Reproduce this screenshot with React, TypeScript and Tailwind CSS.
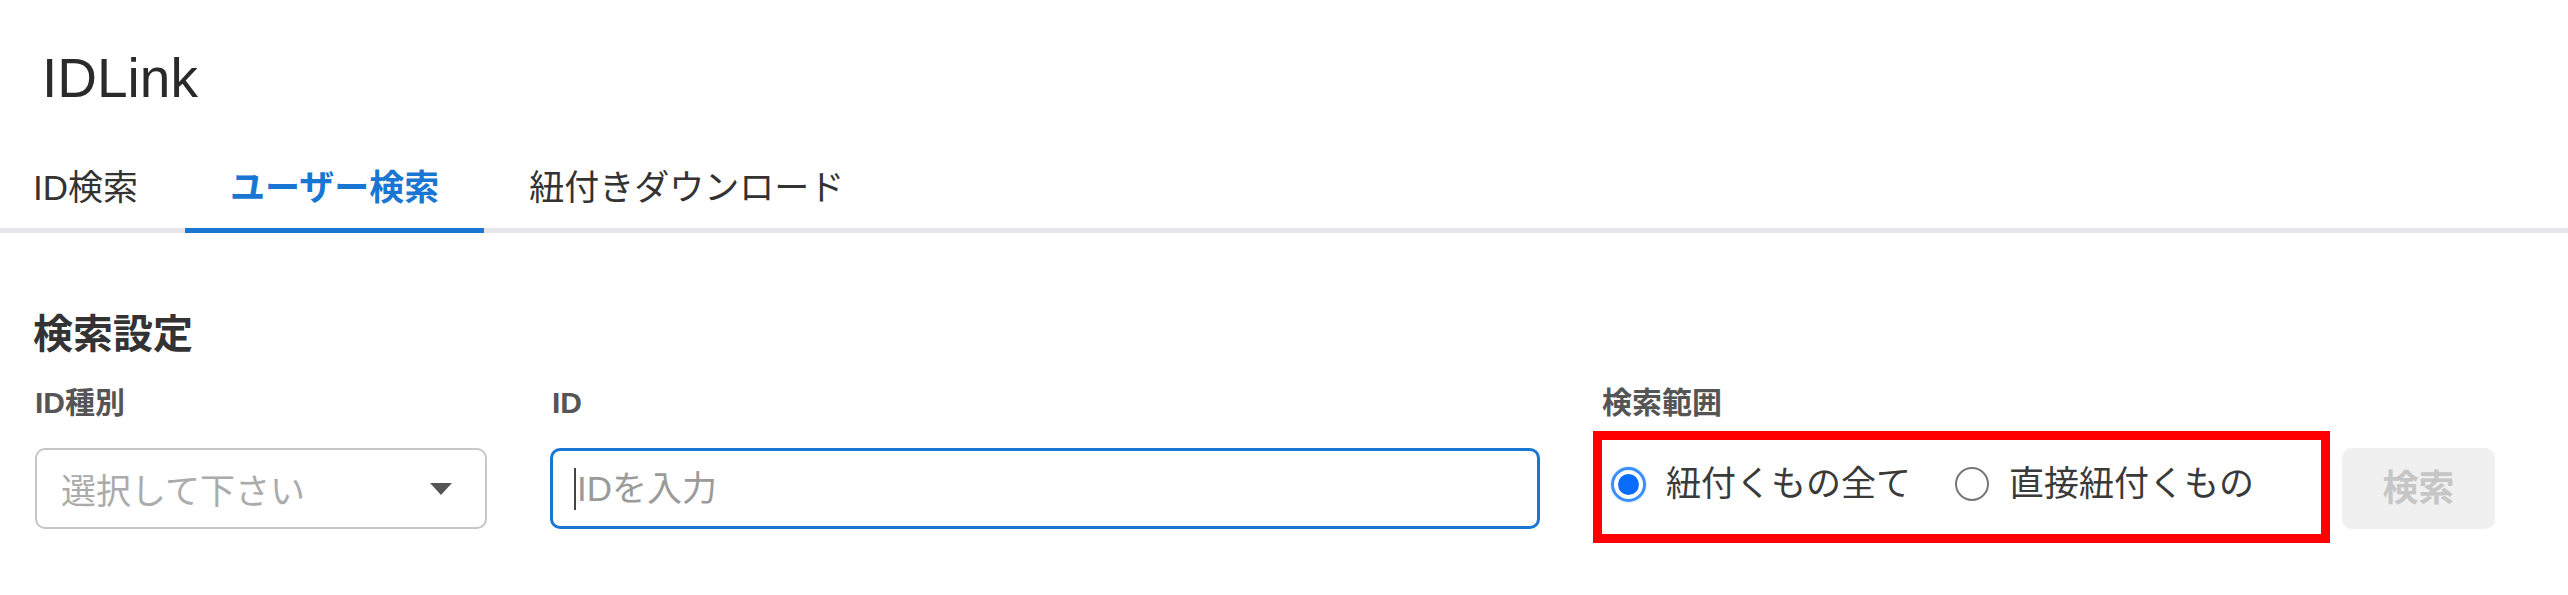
import { useState } from 'react';

// ─── Tabs ─────────────────────────────────────────────────────────────────────

const TABS = ['ID検索', 'ユーザー検索', '紐付きダウンロード'];

function Tab({ label, active, first, onClick }: { label: string; active: boolean; first?: boolean; onClick: () => void }) {
  return (
    <button
      onClick={onClick}
      className={[
        'pt-[20px] pb-[20px] -mb-[5px] border-b-[5px] text-[35px] leading-[40px] whitespace-nowrap',
        first ? 'pl-[33px] pr-[47px]' : 'px-[45px]',
        active ? 'border-[#1976d2] text-[#1976d2] font-bold' : 'border-transparent text-[#333]',
      ].join(' ')}
    >
      {label}
    </button>
  );
}

// ─── Radio ────────────────────────────────────────────────────────────────────

function Radio({ label, checked, onClick }: { label: string; checked: boolean; onClick: () => void }) {
  return (
    <label className="flex items-center gap-[20px] cursor-pointer" onClick={onClick}>
      {checked ? (
        <span className="flex items-center justify-center w-[35px] h-[35px] rounded-full border-[3px] border-[#3b8eff] shadow-[0_0_2px_#8fc0ff]">
          <span className="w-[21px] h-[21px] rounded-full bg-[#0a6cff]" />
        </span>
      ) : (
        <span className="w-[34px] h-[34px] rounded-full border-[2.5px] border-[#777]" />
      )}
      <span className="text-[35px] leading-[40px] text-[#3a3a3a]">{label}</span>
    </label>
  );
}

function FieldLabel({ children }: { children: string }) {
  return <div className="text-[30px] leading-[36px] font-bold text-[#555] whitespace-nowrap">{children}</div>;
}

// ─── App ──────────────────────────────────────────────────────────────────────

export default function App() {
  const [tab, setTab] = useState(1);
  const [scope, setScope] = useState<'all' | 'direct'>('all');

  return (
    <div className="w-[2568px] h-[595px] bg-white overflow-hidden font-['Liberation_Sans','Noto_Sans_CJK_JP',sans-serif]">
      {/* ── Header ── */}
      <div className="pt-[45px] pl-[42px]">
        <h1 className="text-[55px] leading-[66px] text-[#2a2a2a]">IDLink</h1>
      </div>

      {/* ── Tabs ── */}
      <div className="mt-[37px] flex border-b-[5px] border-[#e6e6ea]">
        {TABS.map((t, i) => (
          <Tab key={t} label={t} active={tab === i} first={i === 0} onClick={() => setTab(i)} />
        ))}
      </div>

      {/* ── Search settings ── */}
      <div className="pl-[33px] pt-[77px]">
        <h2 className="text-[40px] leading-[48px] font-bold text-[#333]">検索設定</h2>

        <div className="mt-[27px] flex items-start">
          {/* ID type */}
          <div className="flex flex-col gap-[27px] w-[452px] ml-[2px]">
            <FieldLabel>ID種別</FieldLabel>
            <div className="flex items-center justify-between h-[81px] pl-[24px] pr-[33px] pt-[6px] border-[2.5px] border-[#c6c6c6] rounded-[10px]">
              <span className="text-[35px] leading-[40px] text-[#ababab]">選択して下さい</span>
              <svg width="22" height="12" viewBox="0 0 22 12" className="-mt-[6px]">
                <polygon points="0,0 22,0 11,12" fill="#555" />
              </svg>
            </div>
          </div>

          {/* ID */}
          <div className="flex flex-col gap-[27px] w-[990px] ml-[63px]">
            <div className="pl-[2px]">
              <FieldLabel>ID</FieldLabel>
            </div>
            <div className="relative">
              <input
                readOnly
                placeholder="IDを入力"
                className="w-full h-[81px] pl-[24px] border-[3px] border-[#1976d2] rounded-[10px] outline-none text-[35px] text-[#333] placeholder:text-[#9a9a9a]"
              />
              <span className="absolute left-[24px] top-[20px] w-[2px] h-[42px] bg-[#444]" />
            </div>
          </div>

          {/* Scope */}
          <div className="flex flex-col gap-[27px] w-[722px] ml-[60px]">
            <div className="pl-[2px]">
              <FieldLabel>検索範囲</FieldLabel>
            </div>
            <div className="relative flex items-center h-[81px] pl-[11px] pb-[9px] gap-[44px]">
              <Radio label="紐付くもの全て" checked={scope === 'all'} onClick={() => setScope('all')} />
              <Radio label="直接紐付くもの" checked={scope === 'direct'} onClick={() => setScope('direct')} />
              <div className="absolute -top-[17px] -bottom-[14px] -left-[7px] -right-[8px] border-[9px] border-[#ff0000] pointer-events-none" />
            </div>
          </div>

          {/* Button */}
          <button
            disabled
            className="mt-[63px] ml-[20px] w-[153px] h-[81px] rounded-[10px] bg-[#f0f0f0] text-[36px] font-bold text-[#c6c6c6]"
          >
            検索
          </button>
        </div>
      </div>
    </div>
  );
}
